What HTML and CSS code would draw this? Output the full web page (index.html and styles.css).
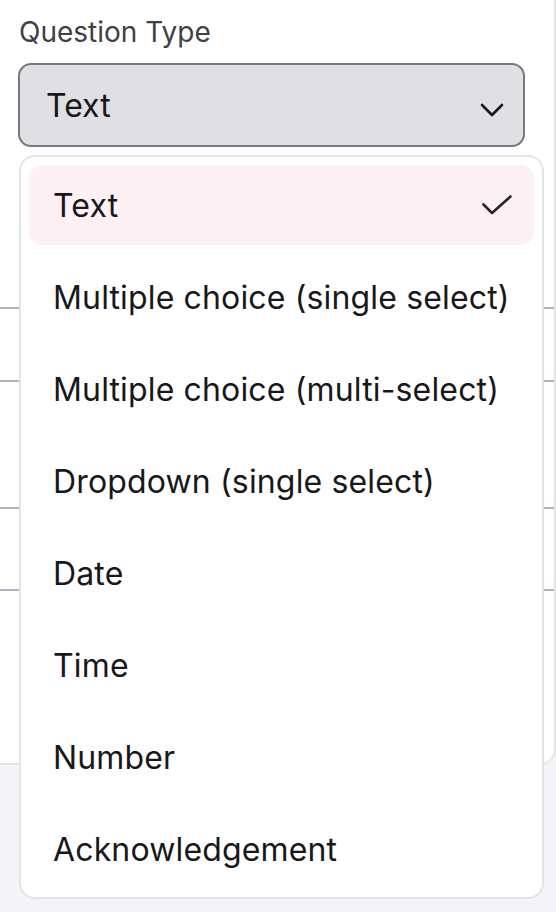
FILE: index.html
```html
<!DOCTYPE html>
<html lang="en">
<head>
    <meta charset="UTF-8">
    <meta name="viewport" content="width=device-width, initial-scale=1.0">
    <title>Question Type</title>
    <link rel="stylesheet" href="styles.css">
</head>
<body>
    <div class="page">
        <div class="card">
            <div class="field">
                <label class="field-label">Question Type</label>
                <div class="select">
                    <span>Text</span>
                    <svg class="chevron" width="26" height="16" viewBox="0 0 26 16" fill="none" stroke="currentColor" stroke-width="2.6" stroke-linecap="round" stroke-linejoin="round"><path d="M3 3l10 10 10-10"/></svg>
                </div>
            </div>
            <div class="rows">
                <div class="row row-a"></div>
                <div class="row row-b"></div>
                <div class="row row-c"></div>
                <div class="row row-d"></div>
            </div>
        </div>

        <ul class="menu">
            <li class="option selected">
                <span>Text</span>
                <svg class="check" width="32" height="22" viewBox="0 0 32 22" fill="none" stroke="currentColor" stroke-width="2.6" stroke-linecap="round" stroke-linejoin="round"><path d="M2.5 10.5l8.5 8.5L29.5 2.5"/></svg>
            </li>
            <li class="option">Multiple choice (single select)</li>
            <li class="option">Multiple choice (multi-select)</li>
            <li class="option">Dropdown (single select)</li>
            <li class="option">Date</li>
            <li class="option">Time</li>
            <li class="option">Number</li>
            <li class="option">Acknowledgement</li>
        </ul>
    </div>
</body>
</html>
```

FILE: styles.css
```css
* {
    box-sizing: border-box;
}
body {
    margin: 0;
    background: #f4f4f6;
    font-family: 'Inter', 'Noto Sans', sans-serif;
    color: #18181b;
}
.page {
    position: relative;
    width: 556px;
    height: 912px;
    overflow: hidden;
}
.card {
    height: 765px;
    background: #fff;
    border-right: 2px solid #e4e4e8;
    border-bottom: 2px solid #e4e4e8;
    border-radius: 0 0 16px 0;
    padding-top: 15px;
}
.field {
    padding: 0 29px 0 18px;
}
.field-label {
    display: block;
    font-size: 28px;
    color: #3f3f46;
    line-height: 34px;
    margin-left: 1px;
    margin-bottom: 14px;
}
.select {
    display: flex;
    align-items: center;
    justify-content: space-between;
    height: 84px;
    padding: 0 18px 0 26px;
    background: #dfdfe4;
    border: 2px solid #77758a;
    border-radius: 13px;
    font-size: 32px;
}
.chevron {
    color: #18181b;
    margin-top: 10px;
}
.row {
    border-bottom: 2px solid #b3b1c0;
}
.row-a { height: 162px; }
.row-b { height: 73px; }
.row-c { height: 127px; }
.row-d { height: 82px; }

.menu {
    position: absolute;
    top: 155px;
    left: 19px;
    width: 525px;
    margin: 0;
    padding: 8px;
    list-style: none;
    background: #fff;
    border: 2px solid #e4e4e8;
    border-radius: 16px;
    display: flex;
    flex-direction: column;
    gap: 12px;
}
.option {
    display: flex;
    align-items: center;
    justify-content: space-between;
    height: 80px;
    padding: 0 21px 0 24px;
    border-radius: 13px;
    font-size: 32px;
    letter-spacing: 0.15px;
}
.option.selected {
    background: #fef1f5;
}
.check {
    color: #27272a;
}
```
